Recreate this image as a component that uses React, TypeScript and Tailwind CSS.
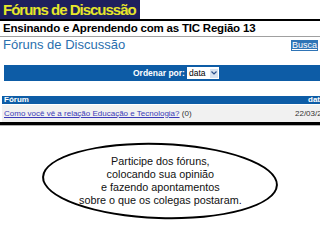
export default function App() {
  return (
    <div
      className="w-[320px] h-[240px] overflow-hidden bg-white text-black"
      style={{ fontFamily: '"Liberation Sans", Arial, sans-serif' }}
    >
      {/* banner */}
      <div className="h-[19px] w-[140px] bg-[#1e1f5e] text-[#e6e62a] font-bold text-[15px] tracking-[-1px] leading-[20px] pl-[3px] whitespace-nowrap">
        Fóruns de Discussão
      </div>
      <div className="h-[2px] bg-black" />
      <div className="h-[15px] leading-[15px] text-[11.5px] font-bold pl-[3px] tracking-[-0.2px] whitespace-nowrap">
        Ensinando e Aprendendo com as TIC Região 13
      </div>
      <div className="h-px bg-[#a0a0a0]" />

      <div className="flex items-center justify-between h-[16px] pl-[3px] pr-[2px]">
        <span className="text-[13px] leading-[16px] text-[#2a6fae] whitespace-nowrap">Fóruns de Discussão</span>
        <span className="bg-[#2f74b6] text-white text-[9px] leading-[9px] underline px-[1px] py-[1px]">Busca</span>
      </div>

      {/* ordenar */}
      <div className="mt-[12px] ml-[4px] w-[340px] h-[16px] bg-[#0d5ca6] flex items-center pl-[129px]">
        <span className="text-white font-bold text-[8.5px] leading-[10px] whitespace-nowrap">Ordenar por:</span>
        <div className="ml-[2px] w-[32px] h-[12px] bg-white flex items-center justify-between pl-[2px] pr-[1px]">
          <span className="text-[8.5px] leading-[10px]">data</span>
          <span className="w-[8px] h-[9px] bg-[#d6e2f0] flex items-center justify-center">
            <svg width="6" height="4" viewBox="0 0 6 4">
              <path d="M0.5 0.5 L3 3 L5.5 0.5" fill="none" stroke="#2a4f8a" strokeWidth="1.2" />
            </svg>
          </span>
        </div>
      </div>

      {/* table */}
      <div className="mt-[15px] ml-[2px] w-[360px]">
        <div className="grid grid-cols-[293px_1fr] h-[8px] bg-[#0d5ca6] text-white font-bold text-[8px] leading-[8px]">
          <span className="pl-[2px]">Fórum</span>
          <span className="pl-[13px]">data</span>
        </div>
        <div className="grid grid-cols-[293px_1fr] items-center h-[17px] mt-px bg-[#f1f1f1] text-[8px] leading-[10px] whitespace-nowrap">
          <span className="pl-[2px]">
            <span className="text-[#3a3ab8] underline">Como você vê a relação Educação e Tecnologia?</span>{' '}
            <span className="text-[#333]">(0)</span>
          </span>
          <span className="text-[#333]">22/03/2009</span>
        </div>
      </div>
      <div className="h-[3px] bg-black" />
      <div className="h-px bg-[#b0b0b0]" />

      {/* balão */}
      <div className="mt-[17px] ml-[42px] w-[236px] h-[76px] rounded-[50%] border-2 border-black rotate-[2deg] flex items-center justify-center">
        <p className="-rotate-[2deg] text-center text-[10.8px] leading-[13px] text-[#111] whitespace-nowrap">
          Participe dos fóruns,
          <br />
          colocando sua opinião
          <br />
          e fazendo apontamentos
          <br />
          sobre o que os colegas postaram.
        </p>
      </div>
    </div>
  );
}
